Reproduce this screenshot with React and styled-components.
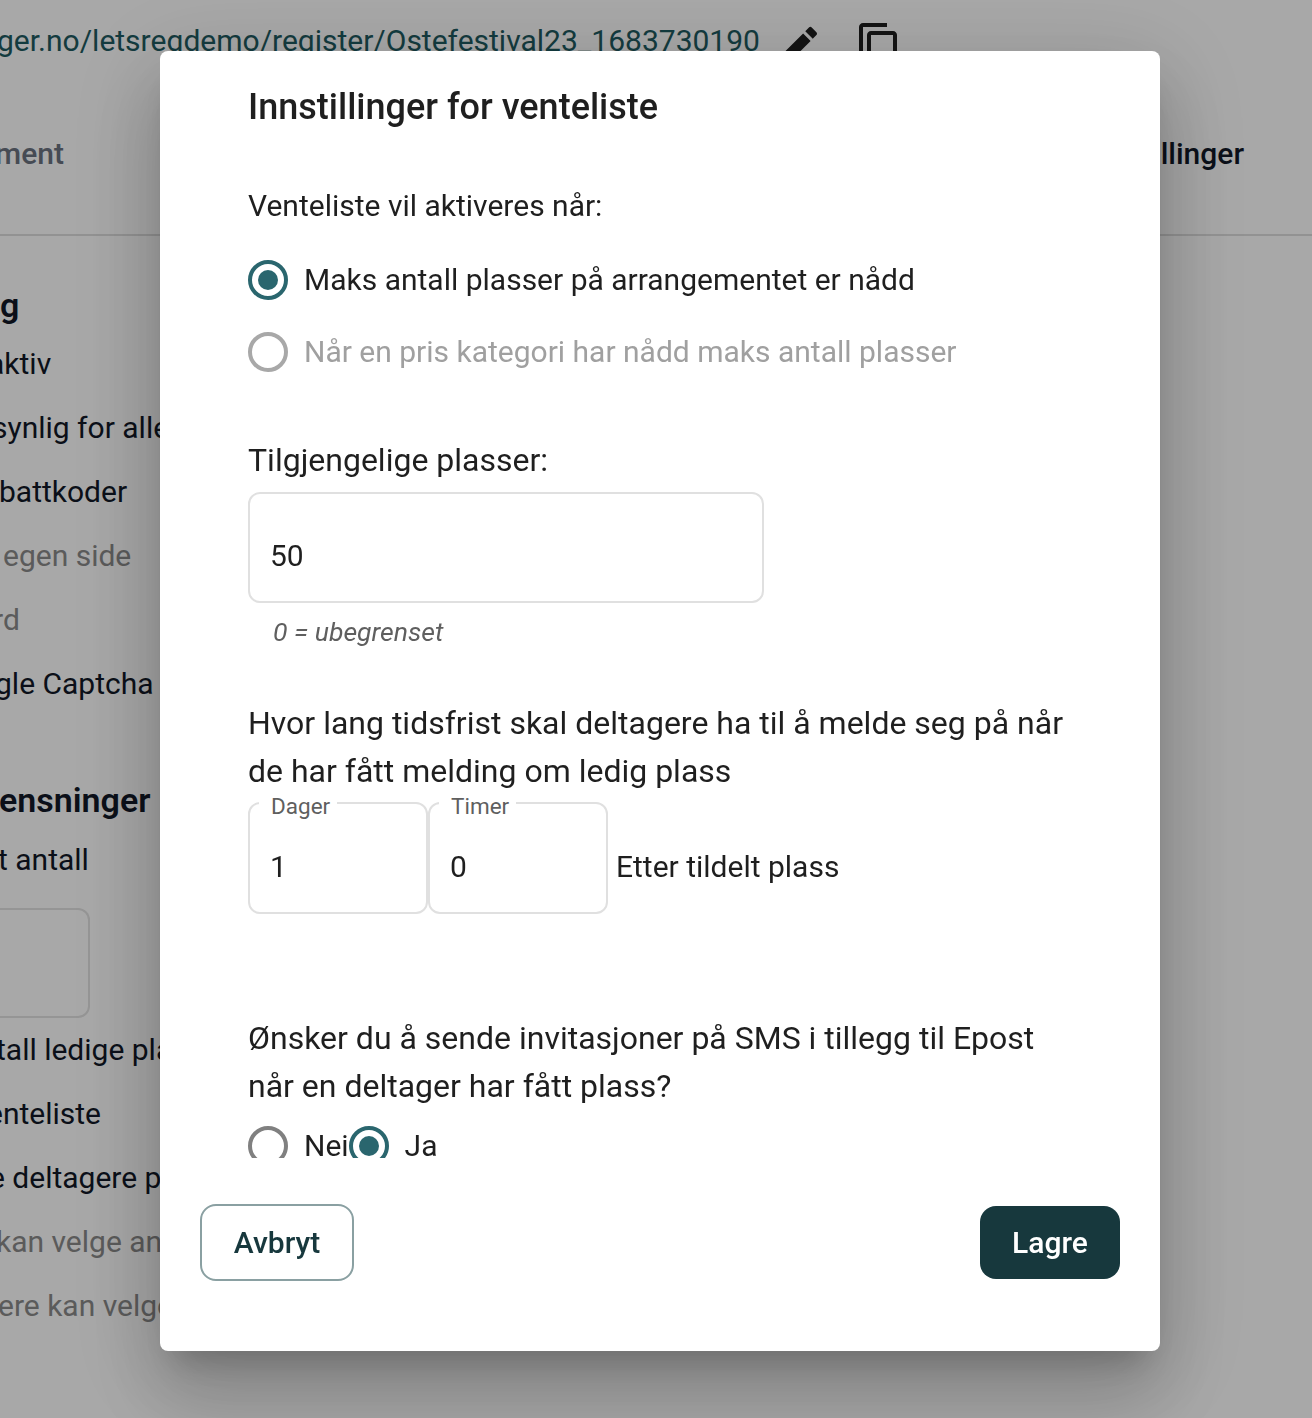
import styled, { createGlobalStyle } from "styled-components";

const GlobalStyle = createGlobalStyle`
  html, body {
    margin: 0;
    height: 1418px;
    overflow: hidden;
    background: #fff;
    font-family: Roboto, "Liberation Sans", sans-serif;
  }
  * {
    box-sizing: border-box;
  }
`;

const Page = styled.div`
  height: 1418px;
  overflow: hidden;
  color: #111827;
  font-size: 30px;
`;

const LinkBar = styled.div`
  display: flex;
  align-items: flex-start;
  height: 48px;
  margin-top: 21px;
  white-space: nowrap;
`;

const LinkText = styled.span`
  width: 775px;
  margin-left: -3px;
  margin-right: 3px;
  color: #1d5a60;
  font-size: 30px;
  line-height: 40px;
`;

const IconButton = styled.span`
  display: flex;
  width: 48px;
  height: 48px;
  margin-right: ${(p) => p.$gap || 0}px;
  color: #1f1f1f;
`;

const Tabs = styled.div`
  display: flex;
  justify-content: space-between;
  align-items: center;
  height: 167px;
  padding: 3px 68px 0 0;
  border-bottom: 2px solid #dedede;
  font-weight: 500;
  color: #6b7280;
`;

const InactiveTab = styled.span`
  margin-left: -5px;
`;

const ActiveTab = styled.span`
  color: #111827;
`;

const Section = styled.div`
  width: 600px;
  padding-top: 45px;
  white-space: nowrap;
`;

const Heading = styled.div`
  height: 48px;
  margin-top: ${(p) => p.$top || 0}px;
  margin-bottom: ${(p) => p.$bottom || 0}px;
  margin-left: ${(p) => p.$shift || 0}px;
  font-size: 34px;
  font-weight: 600;
  line-height: 48px;
`;

const Row = styled.div`
  height: 64px;
  margin-left: ${(p) => p.$shift || 0}px;
  line-height: 64px;
  color: ${(p) => (p.$muted ? "#8a8a8a" : "#111827")};
`;

const GhostInput = styled.div`
  width: 90px;
  height: 110px;
  margin-top: 16px;
  border: 2px solid #e2e2e2;
  border-left: none;
  border-radius: 0 12px 12px 0;
`;

const Overlay = styled.div`
  position: fixed;
  inset: 0;
  display: flex;
  justify-content: center;
  align-items: flex-start;
  padding: 51px 0 0 8px;
  background: rgba(0, 0, 0, 0.34);
`;

const Dialog = styled.div`
  width: 1000px;
  height: 1300px;
  background: #fff;
  border-radius: 8px;
  color: #1f1f1f;
  box-shadow: 0 22px 30px -14px rgba(0, 0, 0, 0.2),
    0 48px 76px 6px rgba(0, 0, 0, 0.14), 0 18px 92px 16px rgba(0, 0, 0, 0.12);
`;

const DialogBody = styled.div`
  height: 1107px;
  overflow: hidden;
  padding: 32px 88px 0;
`;

const Title = styled.h2`
  margin: 0 0 51px;
  font-size: 36px;
  font-weight: 500;
  line-height: 48px;
`;

const Text = styled.p`
  margin: ${(p) => p.$top || 0}px 0 ${(p) => p.$bottom || 0}px;
  font-size: ${(p) => p.$size || 32}px;
  line-height: 48px;
`;

const RadioRow = styled.div`
  display: flex;
  align-items: center;
  height: 72px;
  color: ${(p) => (p.$disabled ? "#a0a0a0" : "#1f1f1f")};
`;

const RadioCircle = styled.span`
  display: flex;
  flex: none;
  align-items: center;
  justify-content: center;
  width: 40px;
  height: 40px;
  border: 4px solid ${(p) => p.$color};
  border-radius: 50%;

  &::after {
    content: "";
    display: ${(p) => (p.$checked ? "block" : "none")};
    width: 20px;
    height: 20px;
    border-radius: 50%;
    background: ${(p) => p.$color};
  }
`;

const RadioLabel = styled.span`
  margin-left: 16px;
  font-size: 30px;
  line-height: 48px;
`;

const NumberInput = styled.input`
  display: block;
  width: ${(p) => p.$width}px;
  height: ${(p) => p.$height}px;
  padding: 16px 20px 0;
  border: 2px solid #e0e0e0;
  border-radius: 12px;
  outline: none;
  background: #fff;
  color: #1f1f1f;
  font-family: inherit;
  font-size: 30px;
`;

const Helper = styled.div`
  margin: 9px 0 47px 25px;
  color: #5f5f5f;
  font-size: 26.6px;
  font-style: italic;
  line-height: 40px;
`;

const DurationRow = styled.div`
  display: flex;
  align-items: center;
  margin: 7px 0 100px;
`;

const Field = styled.div`
  position: relative;
`;

const FieldLabel = styled.label`
  position: absolute;
  top: -12px;
  left: 11px;
  padding: 0 7px 0 12px;
  background: #fff;
  color: #5f5f5f;
  font-size: 22.5px;
  line-height: 32px;
`;

const DurationSuffix = styled.span`
  margin-left: 8px;
  padding-top: 16px;
  font-size: 30px;
`;

const ChoiceRow = styled.div`
  display: flex;
  align-items: center;
  height: 40px;
  margin-top: 16px;
`;

const Footer = styled.div`
  display: flex;
  justify-content: space-between;
  align-items: center;
  padding: 46px 40px 0;
`;

const CancelButton = styled.button`
  width: 154px;
  height: 77px;
  border: 2px solid #8aa0a2;
  border-radius: 16px;
  background: #fff;
  color: #17383d;
  font-family: inherit;
  font-size: 30px;
  font-weight: 500;
`;

const SaveButton = styled.button`
  width: 140px;
  height: 73px;
  border: none;
  border-radius: 16px;
  background: #17383d;
  color: #fff;
  font-family: inherit;
  font-size: 30px;
  font-weight: 500;
`;

const EditIcon = () => (
  <svg viewBox="0 0 24 24" width="48" height="48" fill="currentColor">
    <path d="M3 17.25V21h3.75L17.81 9.94l-3.75-3.75L3 17.25zM20.71 7.04c.39-.39.39-1.02 0-1.41l-2.34-2.34a.9959.9959 0 0 0-1.41 0l-1.83 1.83 3.75 3.75 1.83-1.83z" />
  </svg>
);

const CopyIcon = () => (
  <svg viewBox="0 0 24 24" width="48" height="48" fill="currentColor">
    <path d="M16 1H4c-1.1 0-2 .9-2 2v14h2V3h12V1zm3 4H8c-1.1 0-2 .9-2 2v14c0 1.1.9 2 2 2h11c1.1 0 2-.9 2-2V7c0-1.1-.9-2-2-2zm0 16H8V7h11v14z" />
  </svg>
);

const Radio = ({ checked, color, label }) => (
  <>
    <RadioCircle $checked={checked} $color={color} />
    <RadioLabel>{label}</RadioLabel>
  </>
);

const App = () => {
  return (
    <>
      <GlobalStyle />
      <Page>
        <LinkBar>
          <LinkText>ger.no/letsreqdemo/register/Ostefestival23_1683730190</LinkText>
          <IconButton $gap={32}>
            <EditIcon />
          </IconButton>
          <IconButton>
            <CopyIcon />
          </IconButton>
        </LinkBar>
        <Tabs>
          <InactiveTab>ment</InactiveTab>
          <ActiveTab>llinger</ActiveTab>
        </Tabs>
        <Section>
          <Heading $bottom={3}>g</Heading>
          <Row $shift={-12}>aktiv</Row>
          <Row $shift={-8}>synlig for alle deltagere</Row>
          <Row $shift={-1}>battkoder</Row>
          <Row $muted $shift={3}>egen side</Row>
          <Row $muted $shift={-7}>rd</Row>
          <Row $shift={-5}>gle Captcha</Row>
          <Heading $top={60} $bottom={4} $shift={-1}>ensninger</Heading>
          <Row $shift={-2}>t antall</Row>
          <GhostInput />
          <Row $shift={-4}>tall ledige plasser</Row>
          <Row $shift={-13}>enteliste</Row>
          <Row $shift={-11}>e deltagere på</Row>
          <Row $muted $shift={-4}>kan velge antall</Row>
          <Row $muted $shift={-2}>ere kan velge</Row>
        </Section>
      </Page>
      <Overlay>
        <Dialog>
          <DialogBody>
            <Title>Innstillinger for venteliste</Title>
            <Text $size={30} $bottom={14}>Venteliste vil aktiveres når:</Text>
            <RadioRow>
              <Radio checked color="#2a666e" label="Maks antall plasser på arrangementet er nådd" />
            </RadioRow>
            <RadioRow $disabled>
              <Radio color="#a8a8a8" label="Når en pris kategori har nådd maks antall plasser" />
            </RadioRow>
            <Text $top={48} $bottom={8}>
              Tilgjengelige plasser:
            </Text>
            <NumberInput $width={516} $height={111} defaultValue="50" />
            <Helper>0 = ubegrenset</Helper>
            <Text>
              Hvor lang tidsfrist skal deltagere ha til å melde seg på når de har
              fått melding om ledig plass
            </Text>
            <DurationRow>
              <Field>
                <FieldLabel>Dager</FieldLabel>
                <NumberInput $width={180} $height={112} defaultValue="1" />
              </Field>
              <Field>
                <FieldLabel>Timer</FieldLabel>
                <NumberInput $width={180} $height={112} defaultValue="0" />
              </Field>
              <DurationSuffix>Etter tildelt plass</DurationSuffix>
            </DurationRow>
            <Text>
              Ønsker du å sende invitasjoner på SMS i tillegg til Epost når en
              deltager har fått plass?
            </Text>
            <ChoiceRow>
              <Radio color="#808080" label="Nei" />
              <Radio checked color="#2a666e" label="Ja" />
            </ChoiceRow>
          </DialogBody>
          <Footer>
            <CancelButton>Avbryt</CancelButton>
            <SaveButton>Lagre</SaveButton>
          </Footer>
        </Dialog>
      </Overlay>
    </>
  );
};

export default App;
